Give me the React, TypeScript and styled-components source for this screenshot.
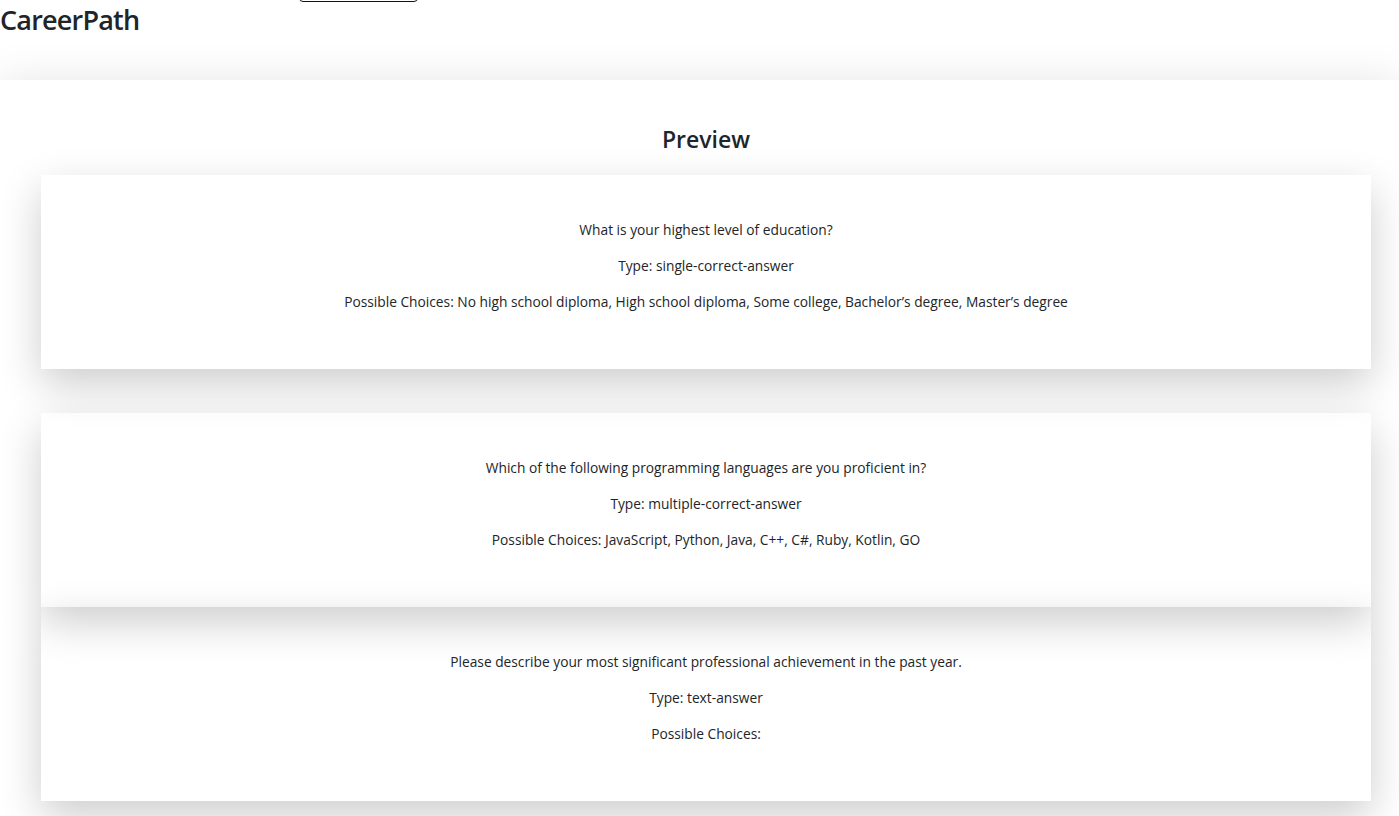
import React from "react";
import styled, { createGlobalStyle } from "styled-components";

const GlobalStyle = createGlobalStyle`
  html { scrollbar-width: none; }
  ::-webkit-scrollbar { display: none; }
  body {
    margin: 0;
    background: #ffffff;
    font-family: "Open Sans", "Noto Sans", Arial, sans-serif;
    color: #212529;
    overflow-x: hidden;
  }
`;

const Header = styled.header`
  display: grid;
  grid-template-columns: 299px auto;
  align-items: start;
  height: 80px;
  background: #ffffff;
`;

const Brand = styled.h1`
  margin: 3px 0 0;
  font-size: 27px;
  line-height: 34px;
  font-weight: 600;
  color: #212529;
  letter-spacing: -0.8px;
`;

const NavButton = styled.button`
  margin-top: -30px;
  width: 119px;
  height: 32px;
  border: 1px solid #111;
  border-radius: 4px;
  background: #ffffff;
  padding: 0;
`;

const Main = styled.main`
  background: #ffffff;
  box-shadow: 0 0 40px rgba(0, 0, 0, 0.1);
  padding: 43px 28px 40px 41px;
  display: flex;
  flex-direction: column;
`;

const Title = styled.h2`
  margin: 0 0 20px;
  text-align: center;
  font-size: 23px;
  line-height: 32px;
  font-weight: 600;
  color: #212529;
`;

const Card = styled.section<{ $gapTop: number }>`
  margin-top: ${(p) => p.$gapTop}px;
  padding: 44px 20px 56px;
  box-shadow: 0 15px 40px rgba(0, 0, 0, 0.2);
  display: flex;
  flex-direction: column;
  gap: 14px;
`;

const Line = styled.p`
  margin: 0;
  text-align: center;
  font-size: 13.75px;
  line-height: 22px;
  color: #212529;
`;

const questions = [
  {
    q: "What is your highest level of education?",
    type: "single-correct-answer",
    choices:
      "No high school diploma, High school diploma, Some college, Bachelor\u2019s degree, Master\u2019s degree",
    gap: 0,
  },
  {
    q: "Which of the following programming languages are you proficient in?",
    type: "multiple-correct-answer",
    choices: "JavaScript, Python, Java, C++, C#, Ruby, Kotlin, GO",
    gap: 44,
  },
  {
    q: "Please describe your most significant professional achievement in the past year.",
    type: "text-answer",
    choices: "",
    gap: 0,
  },
];

export default function App() {
  return (
    <>
      <GlobalStyle />
      <Header>
        <Brand>CareerPath</Brand>
        <NavButton type="button" aria-label="Log out" />
      </Header>
      <Main>
        <Title>Preview</Title>
        {questions.map((item) => (
          <Card key={item.q} $gapTop={item.gap}>
            <Line>{item.q}</Line>
            <Line>Type: {item.type}</Line>
            <Line>Possible Choices: {item.choices}</Line>
          </Card>
        ))}
      </Main>
    </>
  );
}
